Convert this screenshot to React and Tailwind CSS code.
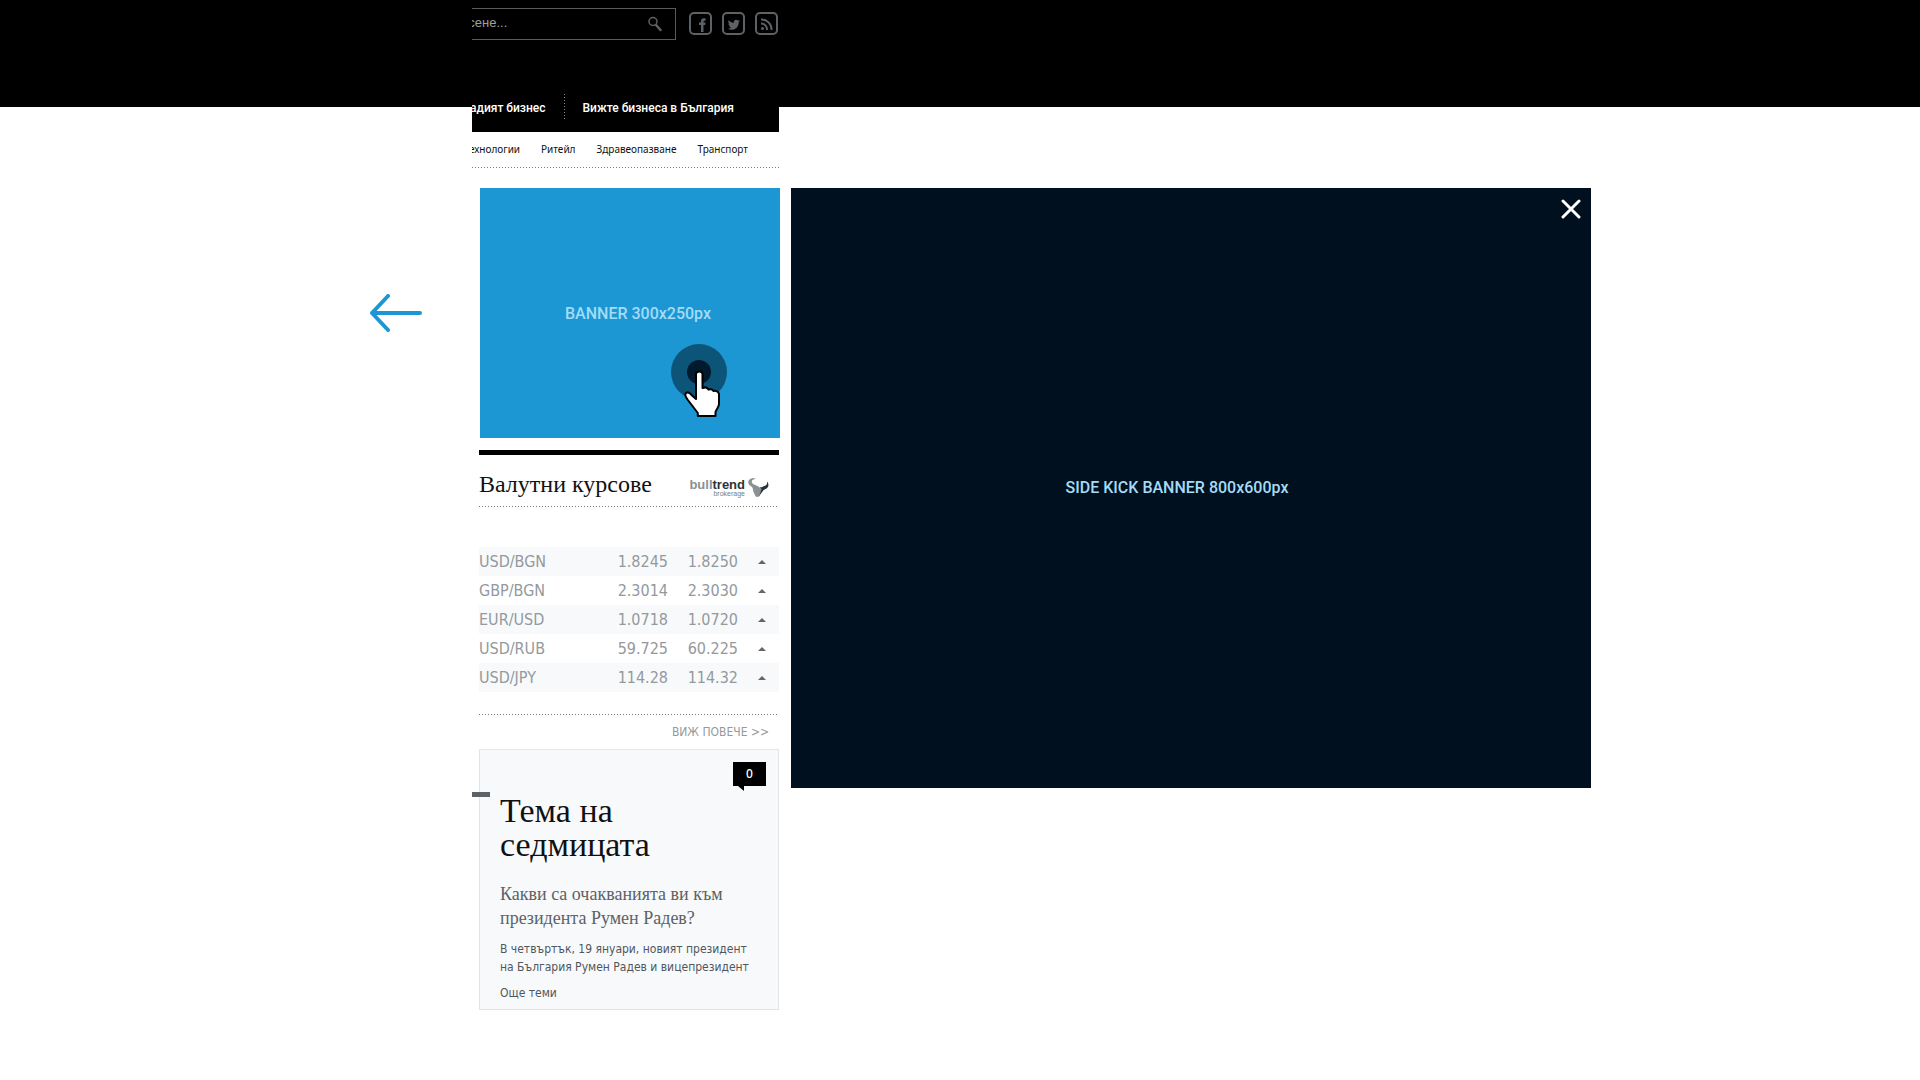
import React, { useState } from "react";

const socials = [
  {
    label: "Facebook",
    icon: <path d="M12 20v-7h-2v-2.500h2V9.200C12 7.200 13 6.200 14.800 6.200h1.700v2.500h-1.100c-.6 0-.9.300-.9.900v.900h2l-.300 2.500h-1.700v7z" fill="currentColor" />,
  },
  {
    label: "Twitter",
    icon: <path d="M18 9c-.5.200-.9.300-1.400.4.500-.3.900-.8 1.100-1.400-.5.300-1 .5-1.600.6a2.500 2.500 0 0 0-4.300 2.300C9.700 10.800 7.900 9.800 6.600 8.300c-.7 1.200-.3 2.600.8 3.400-.4 0-.8-.1-1.100-.3 0 1.200.9 2.200 2 2.500-.4.100-.8.100-1.100 0 .3 1 1.200 1.700 2.300 1.700-1.100.9-2.400 1.200-3.700 1.100 4.800 3 11-.2 10.900-6.400.5-.3 1-.8 1.300-1.300z" fill="currentColor" />,
  },
  {
    label: "RSS",
    icon: (
      <g fill="none" stroke="currentColor" strokeWidth="2">
        <circle cx="7.500" cy="16.500" r="1.500" fill="currentColor" stroke="none" />
        <path d="M6 11.500a6 6 0 0 1 6 6.500M6 7.500A10 10 0 0 1 16.500 18" />
      </g>
    ),
  },
];

const rates = [
  { pair: "USD/BGN", buy: "1.8245", sell: "1.8250" },
  { pair: "GBP/BGN", buy: "2.3014", sell: "2.3030" },
  { pair: "EUR/USD", buy: "1.0718", sell: "1.0720" },
  { pair: "USD/RUB", buy: "59.725", sell: "60.225" },
  { pair: "USD/JPY", buy: "114.28", sell: "114.32" },
];

const DottedLine = () => (
  <div className="h-px bg-[repeating-linear-gradient(90deg,#777_0_1px,transparent_1px_3px)]" />
);

function Header() {
  return (
    <header className="h-[107px] bg-black pl-[472px]">
      <div className="flex h-[132px] w-[307px] flex-col bg-black">
        <div className="flex items-start pt-2">
          <form className="flex w-[204px] justify-end overflow-hidden" onSubmit={(e) => e.preventDefault()}>
            <div className="flex h-8 w-[240px] shrink-0 items-center border border-[#5a5a5a] pr-3">
              <input
                type="text"
                aria-label="Търсене"
                placeholder="Търсене..."
                className="min-w-0 flex-1 pb-0.5 pl-2 font-['Liberation_Sans',sans-serif] text-[13px] text-[#9aa0a4] outline-none placeholder:text-[#9aa0a4]"
              />
              <button type="submit" aria-label="Търси" className="text-[#5c6266]">
                <svg width="16" height="16" viewBox="0 0 16 16" fill="none" stroke="currentColor">
                  <circle cx="6" cy="5.500" r="4" strokeWidth="1.500" />
                  <path d="M9 9l4.500 5" strokeWidth="2.500" strokeLinecap="round" />
                </svg>
              </button>
            </div>
          </form>
          <div className="mt-1 ml-[13px] flex gap-[10px]">
            {socials.map((s) => (
              <a key={s.label} href="#" aria-label={s.label} className="text-[#5c6266]">
                <svg width="23" height="23" viewBox="0 0 23 23">
                  <rect x="1" y="1" width="21" height="21" rx="4" fill="none" stroke="currentColor" strokeWidth="2" />
                  {s.icon}
                </svg>
              </a>
            ))}
          </div>
        </div>
        <nav className="mt-[54px] flex h-[26px] items-center justify-end overflow-hidden pr-[45px] font-['Roboto',sans-serif] text-[12px] font-medium whitespace-nowrap text-white">
          <a href="#" className="pt-0.5">Младият бизнес</a>
          <span className="mx-[18px] h-full w-px shrink-0 bg-[repeating-linear-gradient(180deg,#888_0_1px,transparent_1px_3px)]" />
          <a href="#" className="pt-0.5">Вижте бизнеса в България</a>
        </nav>
      </div>
    </header>
  );
}

function SubNav() {
  return (
    <>
      <nav className="flex h-[35px] items-center justify-end gap-[21px] overflow-hidden pr-[31px] font-['Noto_Sans',sans-serif] text-[10px] whitespace-nowrap text-[#111]">
        <a href="#">Технологии</a>
        <a href="#">Ритейл</a>
        <a href="#">Здравеопазване</a>
        <a href="#">Транспорт</a>
      </nav>
      <DottedLine />
    </>
  );
}

function Pointer() {
  return (
    <svg className="absolute top-[155px] left-[190px]" width="58" height="76" viewBox="0 0 58 76">
      <circle cx="29" cy="29" r="28" fill="#0d5578" />
      <circle cx="29" cy="29" r="12" fill="#021a2e" />
      <path
        d="M26 56V31c0-3.500 6.500-3.500 6.500 0v14c2.500-1 5-.5 6 1.500 2-.6 4-.2 5 1.500 2.500-.5 5 .5 5.500 3v10c0 3-2.500 5-3.500 8v4H27.800v-3L17.500 56.500c-1.500-2.500-3.500-4.500-1.500-6.500 2-1.500 4 0 5.500 1.900z"
        fill="#fff"
        stroke="#000"
        strokeWidth="2"
        strokeLinejoin="round"
      />
    </svg>
  );
}

function BullTrend() {
  return (
    <a href="#" aria-label="bulltrend brokerage" className="flex items-start gap-[3px] pt-2">
      <span className="flex flex-col items-end">
        <span className="font-['Liberation_Sans',sans-serif] text-[13px] leading-[13px] font-bold text-[#8b9195]">
          bull<span className="text-[#2c3338]">trend</span>
        </span>
        <span className="font-['Liberation_Sans',sans-serif] text-[7px] leading-[6px] text-[#777d81]">brokerage</span>
      </span>
      <svg width="21" height="20" viewBox="0 0 21 20">
        <path d="M5.500 0C1 .5-.5 3 .5 5.500 1.300 7.500 3 8 4 9c1.200 1.500.8 4 2 6 .8 1.400 1 3 2.500 4l2.500-.5c.3-2.500 2.300-4.500 2.700-7L10.500 8.500C8 6.800 4.500 7 3.800 4 3.500 2 5 1 8 1z" fill="#8b9195" />
        <path d="M19 3.500c2.300 2.500 1.700 5.800-.5 7-2 1-3 1.200-4 3L10.500 19c1.500-3 2-5.500 3-7.500L11.500 9c2 .8 4-.8 5.500-1.300 2-.7 2.300-2.200 2-4.200z" fill="#2c3338" />
      </svg>
    </a>
  );
}

function Rates() {
  return (
    <section className="mt-3 border-t-[5px] border-black">
      <div className="flex h-[51px] items-center justify-between pt-[6px] pr-[10px]">
        <h2 className="font-['Liberation_Serif',serif] text-[24px] leading-7 text-[#111]">Валутни курсове</h2>
        <BullTrend />
      </div>
      <DottedLine />
      <table className="mt-10 w-full table-fixed font-['DejaVu_Sans_Condensed','Noto_Sans',sans-serif] text-[16px] text-[#93999d]">
        <tbody>
          {rates.map((r) => (
            <tr key={r.pair} className="h-[29px] odd:bg-[#f8f9fb]">
              <td className="p-0 leading-5">{r.pair}</td>
              <td className="w-[70px] p-0 text-right leading-5">{r.buy}</td>
              <td className="w-[70px] p-0 text-right leading-5">{r.sell}</td>
              <td className="w-[41px] p-0">
                <svg className="ml-5" width="8" height="4" viewBox="0 0 8 4" fill="#666">
                  <path d="M4 0l4 4H0z" />
                </svg>
              </td>
            </tr>
          ))}
        </tbody>
      </table>
      <div className="mt-[22px]">
        <DottedLine />
      </div>
      <div className="flex h-[34px] items-center justify-end pr-[10px] font-['DejaVu_Sans_Condensed','Noto_Sans',sans-serif] text-[12px] text-[#93999d]">
        <a href="#">ВИЖ ПОВЕЧЕ &gt;&gt;</a>
      </div>
    </section>
  );
}

function WeekTopic() {
  return (
    <article className="relative border border-[#dfe5ea] bg-[#f8f9fb] px-5 pt-3 pb-[7px] font-['DejaVu_Sans_Condensed','Noto_Sans',sans-serif] text-[12px] text-[#50575b]">
      <span className="absolute top-[42px] left-[-8px] h-[5px] w-[18px] bg-[#5c6266]" />
      <div className="-mr-2 flex justify-end">
        <a href="#" className="relative flex h-6 w-[33px] items-center justify-center bg-black font-['Noto_Sans',sans-serif] font-medium text-white">
          0
          <svg className="absolute top-6 left-[5px]" width="6" height="5" viewBox="0 0 6 5">
            <path d="M0 0h6v5z" />
          </svg>
        </a>
      </div>
      <h2 className="mt-2 font-['Liberation_Serif',serif] text-[34px] leading-[34px] text-[#111]">
        Тема на
        <br />
        седмицата
      </h2>
      <h3 className="mt-5 font-['Liberation_Serif',serif] text-[18px] leading-6 text-[#5c6266]">
        Какви са очакванията ви към президента Румен Радев?
      </h3>
      <p className="mt-[10px] leading-[18px] whitespace-nowrap">
        В четвъртък, 19 януари, новият президент
        <br />
        на България Румен Радев и вицепрезидент
      </p>
      <a href="#" className="mt-2 block leading-[18px]">
        Още теми
      </a>
    </article>
  );
}

function App() {
  const [open, setOpen] = useState(true);

  return (
    <div className="min-h-screen bg-white">
      <Header />
      <main className="flex items-start pt-[25px]">
        <div className="flex w-[472px] shrink-0 justify-end pt-[162px] pr-[50px]">
          <button type="button" aria-label="Назад">
            <svg width="52" height="38" viewBox="0 0 52 38" fill="none" stroke="#1c97d4" strokeWidth="4" strokeLinecap="round" strokeLinejoin="round">
              <path d="M50 19H2M18 2L2 19l16 17" />
            </svg>
          </button>
        </div>

        <div className="w-[307px] shrink-0">
          <SubNav />
          <div className="pl-[7px]">
            <a href="#" className="relative mt-5 ml-px flex h-[250px] w-[300px] items-center justify-center bg-[#1c97d4] pt-0.5 pl-4 font-['Roboto',sans-serif] text-[16px] font-medium text-[#a2dcf7]">
              BANNER 300x250px
              <Pointer />
            </a>
            <Rates />
            <WeekTopic />
          </div>
        </div>

        {/* side kick banner */}
        {open && (
          <aside className="relative mt-14 ml-3 flex h-[600px] w-full max-w-[800px] items-center justify-center bg-[#01101f] pr-7 font-['Roboto',sans-serif] text-[16px] font-medium text-[#a2dcf7]">
            SIDE KICK BANNER 800x600px
            <button type="button" aria-label="Затвори" className="absolute top-[11px] right-[10px]" onClick={() => setOpen(false)}>
              <svg width="20" height="20" viewBox="0 0 20 20" stroke="#fff" strokeWidth="3" strokeLinecap="round">
                <path d="M2 2l16 16M18 2L2 18" />
              </svg>
            </button>
          </aside>
        )}
      </main>
    </div>
  );
}

export default App;
